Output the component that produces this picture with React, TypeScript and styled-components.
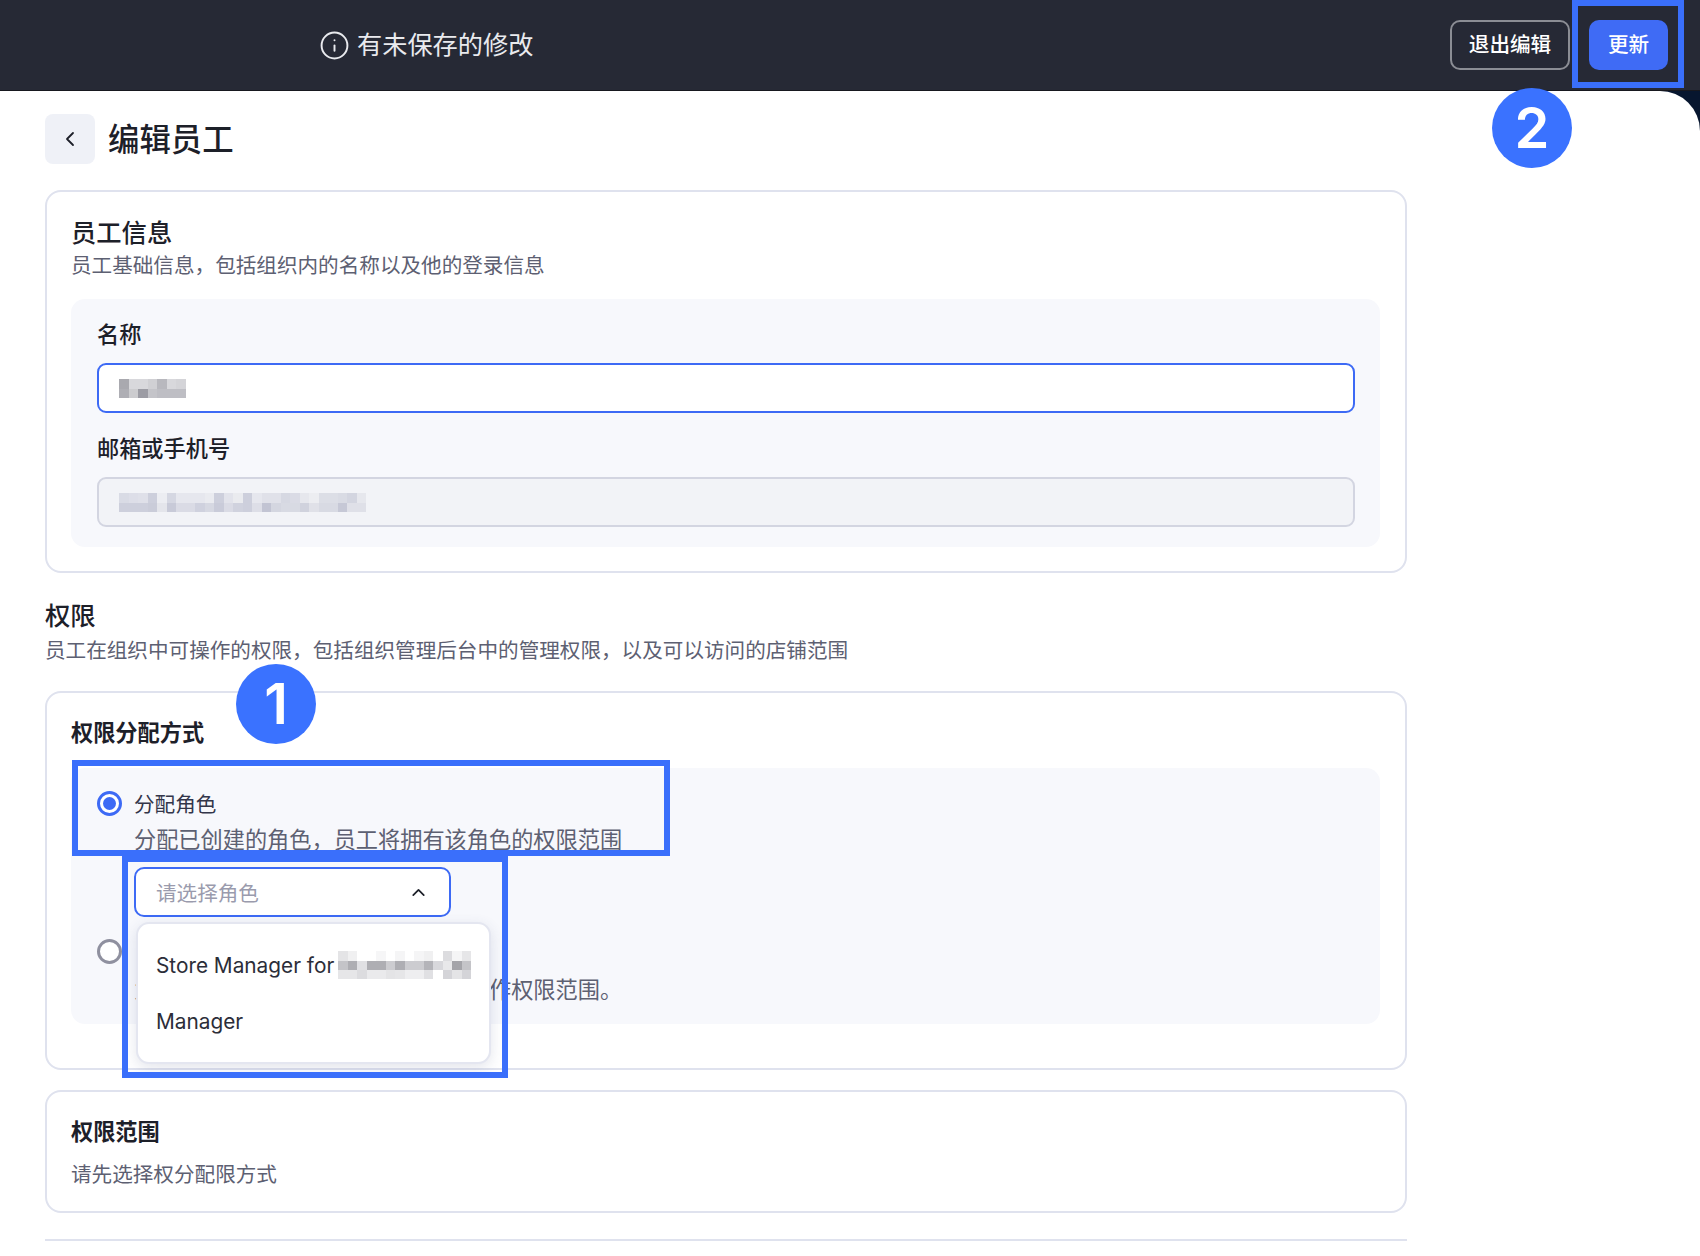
import React from "react";
import styled, { createGlobalStyle } from "styled-components";
import { ChevronLeft, ChevronUp, Info } from "lucide-react";

const Global = createGlobalStyle`
  html, body { margin: 0; padding: 0; background: #fff; }
  * { box-sizing: border-box; }
  body { font-family: Inter, "Noto Sans CJK SC", "Noto Sans", sans-serif; color: #1d2029; }
`;

const Shell = styled.div`
  position: relative;
  width: 1700px;
  height: 1256px;
  overflow: hidden;
  background: #07162f;
`;

const TopBar = styled.header`
  display: flex;
  align-items: center;
  height: 91px;
  padding: 0 32px 0 319px;
  background: #262935;
  border-bottom: 1px solid #17181f;
  color: #e9eaee;
`;

const Notice = styled.div`
  display: flex;
  align-items: center;
  gap: 7px;
  font-size: 25.2px;
  line-height: 34px;
`;

const TopActions = styled.div`
  display: flex;
  gap: 19px;
  margin-left: auto;
`;

const TopButton = styled.button<{ $primary?: boolean }>`
  width: ${(p) => (p.$primary ? "79px" : "120px")};
  height: 50px;
  padding: 0;
  border-radius: 10px;
  border: ${(p) => (p.$primary ? "none" : "2px solid #8b8d94")};
  background: ${(p) => (p.$primary ? "#3f6bf5" : "transparent")};
  color: #fff;
  font: 500 20.6px/1 Inter, "Noto Sans CJK SC", sans-serif;
`;

const Content = styled.main`
  height: 1165px;
  padding: 23px 0 0 45px;
  background: #fff;
  border-top-right-radius: 40px;
`;

const Column = styled.div`
  width: 1362px;
`;

const PageHead = styled.div`
  display: flex;
  align-items: center;
  gap: 13px;
  height: 50px;
  margin-bottom: 26px;
`;

const BackButton = styled.div`
  display: flex;
  align-items: center;
  justify-content: center;
  width: 50px;
  height: 50px;
  border-radius: 8px;
  background: #eff1f7;
  color: #1d2029;
`;

const PageTitle = styled.h1`
  margin: 0;
  padding-top: 2px;
  font-size: 31.4px;
  line-height: 44px;
  font-weight: 500;
`;

const Card = styled.section<{ $top?: number; $pad?: number; $bottom: number }>`
  margin-top: ${(p) => p.$top ?? 0}px;
  padding: ${(p) => p.$pad ?? 24}px 25px ${(p) => p.$bottom}px 24px;
  border: 2px solid #dfe2ee;
  border-radius: 16px;
  background: #fff;
`;

const BigTitle = styled.h2`
  margin: 0;
  font-size: 25.3px;
  line-height: 34px;
  font-weight: 500;
`;

const SmallTitle = styled.h3`
  margin: 0;
  font-size: 22.2px;
  line-height: 30px;
  font-weight: 600;
`;

const Hint = styled.p<{ $top?: number }>`
  margin: ${(p) => p.$top ?? 2}px 0 0;
  font-size: 20.6px;
  line-height: 28px;
  color: #5d6072;
  white-space: nowrap;
`;

const Panel = styled.div<{ $top: number; $pad: number }>`
  margin-top: ${(p) => p.$top}px;
  padding: ${(p) => p.$pad}px 25px 20px 26px;
  border-radius: 14px;
  background: #f7f8fc;
`;

const FieldLabel = styled.label<{ $top?: number }>`
  display: block;
  margin-top: ${(p) => p.$top ?? 0}px;
  padding-top: 1px;
  font-size: 22.2px;
  line-height: 29px;
  font-weight: 500;
`;

const Field = styled.div<{ $disabled?: boolean }>`
  display: flex;
  align-items: center;
  height: 50px;
  margin-top: 14px;
  padding-left: 20px;
  border-radius: 9px;
  border: 2px solid ${(p) => (p.$disabled ? "#d3d5e1" : "#3d6af5")};
  background: ${(p) => (p.$disabled ? "#f2f3f7" : "#fff")};
`;

const Section = styled.div`
  margin: 26px 0 26px;
`;

const Option = styled.div<{ $top?: number }>`
  display: grid;
  grid-template-columns: 25px 1fr;
  column-gap: 12px;
  margin-top: ${(p) => p.$top ?? 0}px;
`;

const Radio = styled.span<{ $on?: boolean }>`
  display: flex;
  align-items: center;
  justify-content: center;
  width: 25px;
  height: 25px;
  margin-top: 2px;
  border-radius: 50%;
  border: 3px solid ${(p) => (p.$on ? "#3d6af5" : "#8f909f")};
  background: #fff;
  &::after {
    content: "";
    display: ${(p) => (p.$on ? "block" : "none")};
    width: 13px;
    height: 13px;
    border-radius: 50%;
    background: #3d6af5;
  }
`;

const OptionBody = styled.div`
  min-width: 0;
`;

const OptionName = styled.div`
  min-height: 28px;
  margin-top: 2px;
  font-size: 20.6px;
  line-height: 28px;
  color: #33364a;
`;

const OptionHint = styled.div<{ $top: number }>`
  margin-top: ${(p) => p.$top}px;
  font-size: 22.2px;
  line-height: 28px;
  color: #5d6072;
  white-space: nowrap;
`;

const SelectWrap = styled.div`
  position: relative;
  width: 317px;
  margin-top: 13px;
`;

const SelectBox = styled.div`
  display: flex;
  align-items: center;
  justify-content: space-between;
  height: 50px;
  padding: 0 20px 0 20px;
  border: 2px solid #3d6af5;
  border-radius: 10px;
  background: #fff;
  color: #9a9bad;
  font-size: 20.6px;
  svg { color: #1d2029; }
`;

const Menu = styled.div`
  position: absolute;
  z-index: 2;
  top: 55px;
  left: 2px;
  width: 355px;
  height: 142px;
  padding: 13px 0;
  border: 2px solid #e4e6f0;
  border-radius: 13px;
  background: #fff;
  box-shadow: 0 4px 14px rgba(60, 70, 120, 0.14);
`;

const MenuItem = styled.div`
  display: flex;
  align-items: center;
  gap: 4px;
  height: 56px;
  padding-left: 18px;
  font-size: 20.8px;
  color: #2b2d38;
  white-space: nowrap;
`;

const Rule = styled.hr`
  height: 2px;
  margin: 26px 0 0;
  border: 0;
  background: #dfe2ee;
`;

const HighlightBox = styled.div<{ $x: number; $y: number; $w: number; $h: number }>`
  position: absolute;
  z-index: 3;
  left: ${(p) => p.$x}px;
  top: ${(p) => p.$y}px;
  width: ${(p) => p.$w}px;
  height: ${(p) => p.$h}px;
  border: 6px solid #3a6ffb;
  pointer-events: none;
`;

const Badge = styled.div<{ $x: number; $y: number }>`
  position: absolute;
  z-index: 4;
  left: ${(p) => p.$x}px;
  top: ${(p) => p.$y}px;
  display: flex;
  align-items: center;
  justify-content: center;
  width: 80px;
  height: 80px;
  border-radius: 50%;
  background: #3a72ff;
  color: #fff;
  font: 600 56px/1 Inter, sans-serif;
`;

const blockSize = 9.5;

function Mosaic({ rows }: { rows: string[][] }) {
  const cols = rows[0].length;
  return (
    <svg width={cols * blockSize} height={rows.length * blockSize} viewBox={`0 0 ${cols * blockSize} ${rows.length * blockSize}`} shapeRendering="crispEdges" aria-hidden>
      {rows.map((row, y) =>
        row.map((c, x) => (
          <rect key={`${x}-${y}`} x={x * blockSize} y={y * blockSize} width={blockSize + 0.5} height={blockSize + 0.5} fill={`#${c}`} />
        ))
      )}
    </svg>
  );
}

const nameRows = [
  "a9a9af d8d8dc d8d8dc d0d0d4 b8b8be d8d8dc d4d4d8".split(" "),
  "aeaeb4 cccccf 9c9ca4 c4c4c9 bebec4 bebec4 bebec4".split(" "),
];

const mailRows = [
  "d9dbe5 dddee8 dfe0e9 cdcfdc ecedf2 d5d7e2 e6e7ee e6e7ee e6e7ee eaebf0 cdcfdc e2e3eb eaebef cdcfdc e6e7ee e0e1e9 e0e1e9 d6d8e2 dadbe5 e6e7ed ecedf1 dcdee6 dcdee6 d9dbe4 d3d5e0 e6e7ed".split(" "),
  "cdcfdc cdcfdc cdcfdc caccd9 e4e5eb c8cad8 dadbe5 dadbe5 cfd1de d6d8e2 c9cbd9 dadbe5 d0d2de cdcfdc dddee7 c2c4d3 d4d6e0 d8dae3 d8dae3 d0d2dd e0e1e8 d8dae3 d8dae3 c6c8d6 dfe0e8 dfe0e8".split(" "),
];

const storeRows = [
  "e4e4e6 f0f0f1 ffffff ffffff f6f6f7 ffffff f5f5f6 ffffff f5f5f6 f0f0f1 ffffff dcdcdf f5f5f6 e6e6e8".split(" "),
  "c4c4c8 aeaeb3 e0e0e3 aeaeb3 aeaeb3 ccccd0 aeaeb3 ccccd0 ccccd0 b4b4b9 d8d8dc e8e8ea a4a4a9 c4c4c8".split(" "),
  "e6e6e8 e6e6e8 dcdcdf eaeaec eaeaec e4e4e6 e6e6e8 eeeef0 eeeef0 e0e0e3 ffffff d4d4d8 e4e4e6 d4d4d8".split(" "),
];

export default function App() {
  return (
    <Shell>
      <Global />
      <TopBar>
        <Notice>
          <Info size={31} strokeWidth={1.5} />
          <span>有未保存的修改</span>
        </Notice>
        <TopActions>
          <TopButton>退出编辑</TopButton>
          <TopButton $primary>更新</TopButton>
        </TopActions>
      </TopBar>
      <Content>
        <Column>
          <PageHead>
            <BackButton>
              <ChevronLeft size={24} strokeWidth={1.8} />
            </BackButton>
            <PageTitle>编辑员工</PageTitle>
          </PageHead>

          <Card $bottom={24}>
            <BigTitle>员工信息</BigTitle>
            <Hint>员工基础信息，包括组织内的名称以及他的登录信息</Hint>
            <Panel $top={19} $pad={20}>
              <FieldLabel>名称</FieldLabel>
              <Field>
                <Mosaic rows={nameRows} />
              </Field>
              <FieldLabel $top={20}>邮箱或手机号</FieldLabel>
              <Field $disabled>
                <Mosaic rows={mailRows} />
              </Field>
            </Panel>
          </Card>

          <Section>
            <BigTitle>权限</BigTitle>
            <Hint $top={4}>员工在组织中可操作的权限，包括组织管理后台中的管理权限，以及可以访问的店铺范围</Hint>
          </Section>

          <Card $pad={25} $bottom={44}>
            <SmallTitle>权限分配方式</SmallTitle>
            <Panel $top={20} $pad={21}>
              <Option>
                <Radio $on />
                <OptionBody>
                  <OptionName>分配角色</OptionName>
                  <OptionHint $top={7}>分配已创建的角色，员工将拥有该角色的权限范围</OptionHint>
                  <SelectWrap>
                    <SelectBox>
                      请选择角色
                      <ChevronUp size={21} strokeWidth={2} />
                    </SelectBox>
                    <Menu>
                      <MenuItem>
                        Store Manager for
                        <Mosaic rows={storeRows} />
                      </MenuItem>
                      <MenuItem>Manager</MenuItem>
                    </Menu>
                  </SelectWrap>
                </OptionBody>
              </Option>
              <Option $top={20}>
                <Radio />
                <OptionBody>
                  <OptionName />
                  <OptionHint $top={9}>为员工单独设置可访问店铺以及可操作权限范围。</OptionHint>
                </OptionBody>
              </Option>
            </Panel>
          </Card>

          <Card $top={20} $pad={25} $bottom={22}>
            <SmallTitle>权限范围</SmallTitle>
            <Hint $top={14}>请先选择权分配限方式</Hint>
          </Card>

          <Rule />
        </Column>
      </Content>

      <HighlightBox $x={1572} $y={0} $w={112} $h={88} />
      <HighlightBox $x={72} $y={760} $w={598} $h={96} />
      <HighlightBox $x={122} $y={856} $w={386} $h={222} />
      <Badge $x={1492} $y={88}>2</Badge>
      <Badge $x={236} $y={664}>1</Badge>
    </Shell>
  );
}
